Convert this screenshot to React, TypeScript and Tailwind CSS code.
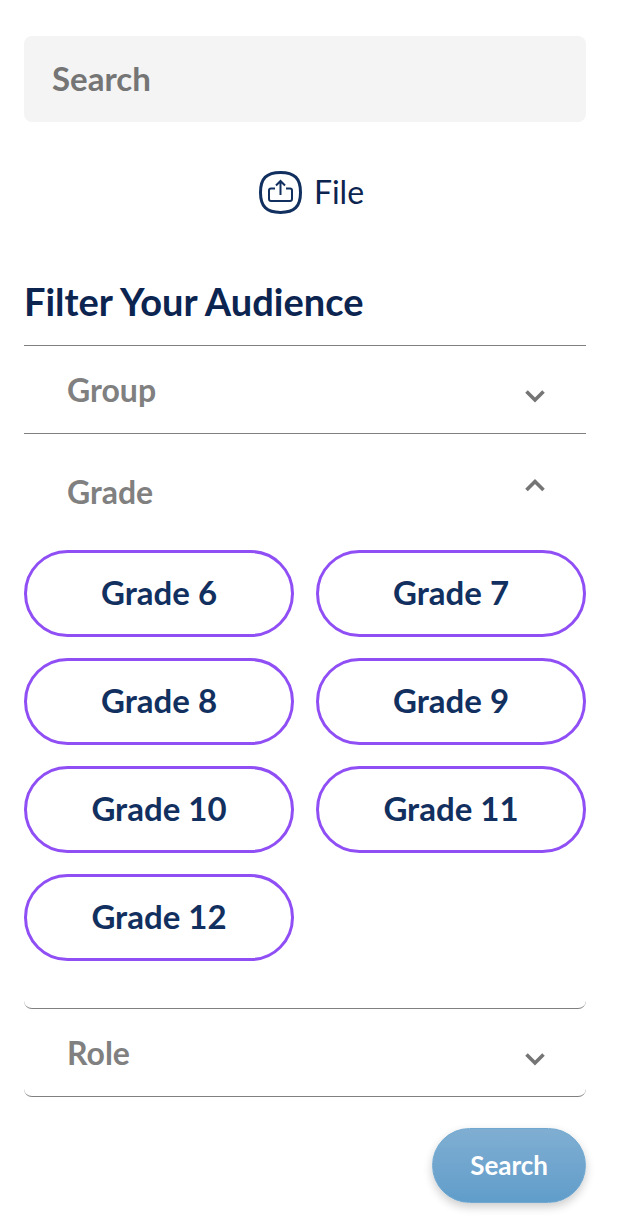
import { useState } from "react";
import clsx from "clsx";

const grades = [6, 7, 8, 9, 10, 11, 12];

function Chevron({ open }: { open: boolean }) {
  return (
    <svg
      viewBox="0 0 24 24"
      className={clsx("h-6 w-6", open ? "mb-3" : "mt-3")}
      fill="none"
      stroke="#757575"
      strokeWidth="3.6"
      aria-hidden="true"
    >
      <path d={open ? "M3.5 16 12 7.5l8.5 8.5" : "M3.5 7.5 12 16l8.5-8.5"} />
    </svg>
  );
}

type SectionProps = {
  title: string;
  defaultOpen?: boolean;
  rounded?: boolean;
  children?: React.ReactNode;
};

function Section({ title, defaultOpen = false, rounded = false, children }: SectionProps) {
  const [open, setOpen] = useState(defaultOpen);

  return (
    <section className={clsx("border-b border-[#808080]", rounded && "rounded-b-lg")}>
      <h3>
        <button
          type="button"
          aria-expanded={open}
          onClick={() => setOpen(!open)}
          className={clsx(
            "flex w-full items-center justify-between pr-[39px] pl-[43px] text-[32px] font-bold text-[#808080]",
            open ? "h-[116px]" : "h-[87px]"
          )}
        >
          {title}
          <Chevron open={open} />
        </button>
      </h3>
      {open && children}
    </section>
  );
}

function FileIcon() {
  return (
    <svg viewBox="0 0 44 44" className="h-11 w-11" fill="none" stroke="#12305f" aria-hidden="true">
      <path
        d="M22.5 2.4C36.5 2.4 42.5 8.4 42.5 22.4S36.5 42.4 22.5 42.4 2.500 36.4 2.500 22.4 8.500 2.4 22.5 2.4Z"
        strokeWidth="3"
      />
      <path
        d="M17 18.5h-4q-2 0-2 2V29q0 2 2 2h19q2 0 2-2v-8.5q0-2-2-2h-4M22.5 25V11.5M18 15.5l4.5-4.5 4.5 4.5"
        strokeWidth="2"
      />
    </svg>
  );
}

export default function App() {
  return (
    <main className="bg-white pt-9 pr-12 pb-7 pl-6 font-['Lato',sans-serif]">
      <input
        type="search"
        aria-label="Search"
        placeholder="Search"
        className="h-[86px] w-full rounded-lg bg-[#f4f4f4] px-7 pb-0.5 text-[33px] font-bold text-[#757575] placeholder:text-[#757575]"
      />

      <div className="mt-12 flex justify-center pl-3">
        <button type="button" className="flex items-center gap-3 text-[32px] leading-11 text-[#0c2450]">
          <FileIcon />
          File
        </button>
      </div>

      {/* Audience filters */}
      <h2 className="mt-[62px] border-b border-[#808080] pb-[19px] text-[38px] leading-[50px] font-bold text-[#0c2450]">
        Filter Your Audience
      </h2>
      <Section title="Group" />
      <Section title="Grade" defaultOpen rounded>
        <div className="grid grid-cols-2 gap-x-[22px] gap-y-[21px] pb-[47px]">
          {grades.map((grade) => (
            <button
              key={grade}
              type="button"
              className="h-[87px] rounded-full border-3 border-[#904ef5] pb-0.5 text-[33px] font-bold text-[#12305f]"
            >
              Grade {grade}
            </button>
          ))}
        </div>
      </Section>
      <Section title="Role" rounded />

      <div className="mt-[31px] flex justify-end">
        <button
          type="button"
          className="h-[75px] rounded-full border border-[#70a8d0] bg-linear-to-b from-[#80aed2] to-[#609dca] px-[37px] text-[26px] font-bold text-white shadow-[0_4px_10px_rgba(0,0,0,0.2)]"
        >
          Search
        </button>
      </div>
    </main>
  );
}
